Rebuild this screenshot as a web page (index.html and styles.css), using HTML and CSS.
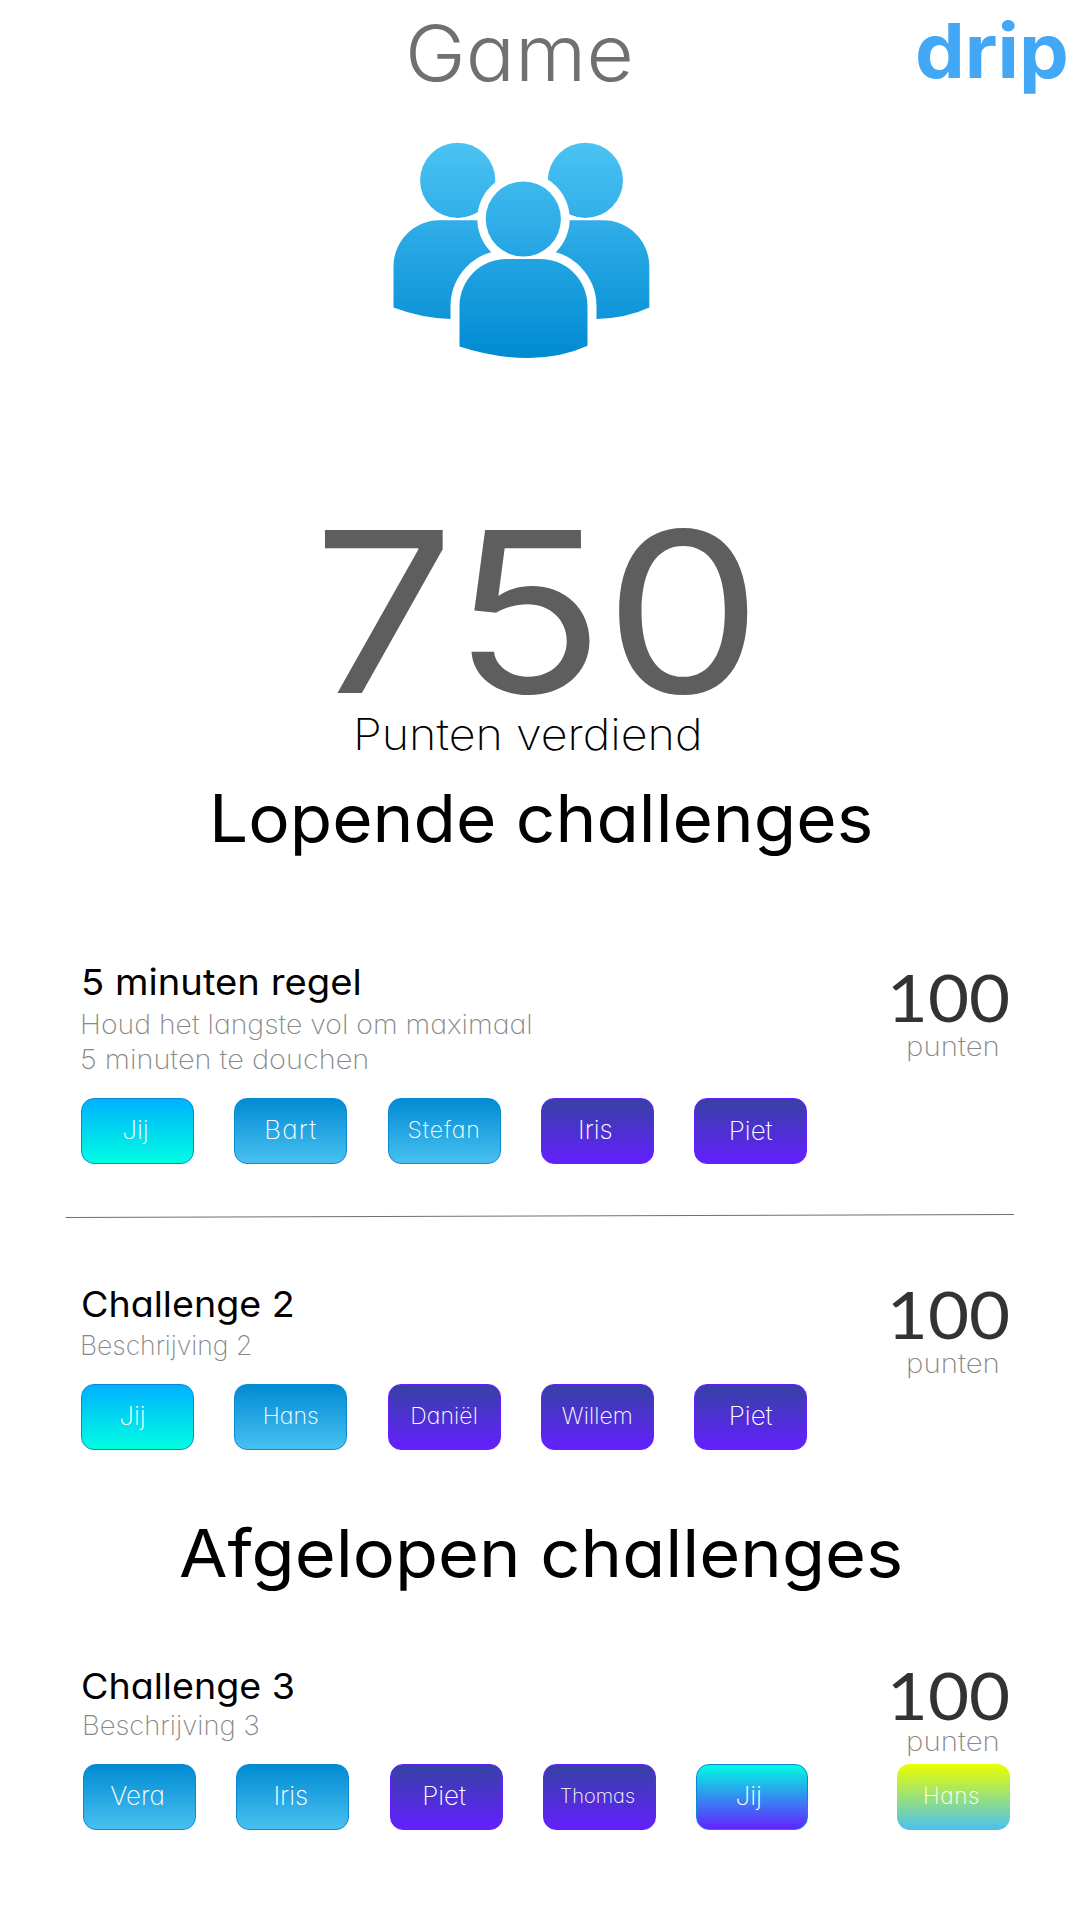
FILE: index.html
```html
<!DOCTYPE html>
<html lang="nl">
<head>
<meta charset="utf-8">
<title>Game</title>
<link rel="stylesheet" href="styles.css">
</head>
<body>
<header class="header">
  <h1 class="title">Game</h1>
  <div class="logo">drip</div>
</header>

<svg class="group-icon" viewBox="390 140 262 222" role="img" aria-label="Groep">
  <defs>
    <linearGradient id="blue" gradientUnits="userSpaceOnUse" x1="0" y1="143" x2="0" y2="358">
      <stop offset="0" stop-color="#4bc3f3"/>
      <stop offset="1" stop-color="#008ad3"/>
    </linearGradient>
  </defs>
  <g fill="url(#blue)">
    <circle cx="457.7" cy="180.3" r="37.6"/>
    <circle cx="585.4" cy="180.3" r="37.6"/>
    <path d="M393.5 266a46 46 0 0 1 46-45.7H500V319H450.500Q421 318 393.500 307.500Z"/>
    <path d="M649.300 266a46 46 0 0 0-46-45.700H545V319H596.500Q627 318 649.300 307.500Z"/>
  </g>
  <path fill="#fff" d="M450.500 322V306a56 56 0 0 1 56-56H540.500a56 56 0 0 1 56 56V322Z"/>
  <circle cx="523.500" cy="219" r="46.200" fill="#fff"/>
  <g fill="url(#blue)">
    <circle cx="523.300" cy="219" r="37.600"/>
    <path d="M459.500 306a47 47 0 0 1 47-47H540.500a47 47 0 0 1 47 47V345.800Q561 358 528 358T459.500 346.500Z"/>
  </g>
</svg>

<section class="total">
  <div class="total-points">750</div>
  <div class="total-label">Punten verdiend</div>
</section>

<main>
  <h2 class="heading heading-current">Lopende challenges</h2>

  <article class="card card-first">
    <div class="info">
      <h3 class="name name-regel">5 minuten regel</h3>
      <p class="desc"><span class="line line-a">Houd het langste vol om maximaal</span><br><span class="line line-b">5 minuten te douchen</span></p>
      <div class="players">
        <span class="chip you nudge-left">Jij</span>
        <span class="chip blue wide">Bart</span>
        <span class="chip blue mid spaced">Stefan</span>
        <span class="chip purple nudge-left">Iris</span>
        <span class="chip purple nudge-down">Piet</span>
      </div>
    </div>
    <div class="score"><div class="points">100</div><div class="unit">punten</div></div>
  </article>

  <svg class="divider" viewBox="0 0 1080 6"><path d="M65.500 4.500L1014 1.500" stroke="#707070"/></svg>

  <article class="card card-second">
    <div class="info">
      <h3 class="name">Challenge 2</h3>
      <p class="desc"><span class="line line-c">Beschrijving 2</span></p>
      <div class="players">
        <span class="chip you nudge-more">Jij</span>
        <span class="chip blue mid">Hans</span>
        <span class="chip purple mid">Daniël</span>
        <span class="chip purple mid">Willem</span>
        <span class="chip purple">Piet</span>
      </div>
    </div>
    <div class="score"><div class="points">100</div><div class="unit">punten</div></div>
  </article>

  <h2 class="heading heading-past">Afgelopen challenges</h2>

  <article class="card card-third">
    <div class="info">
      <h3 class="name">Challenge 3</h3>
      <p class="desc"><span class="line line-d">Beschrijving 3</span></p>
      <div class="players">
        <span class="chip blue nudge-left">Vera</span>
        <span class="chip blue nudge-left">Iris</span>
        <span class="chip purple nudge-left">Piet</span>
        <span class="chip purple small nudge-left">Thomas</span>
        <span class="chip you-past nudge-left">Jij</span>
      </div>
    </div>
    <div class="score"><div class="points">100</div><div class="unit">punten</div><span class="chip winner">Hans</span></div>
  </article>
</main>
</body>
</html>
```
FILE: styles.css
```css
* { box-sizing: border-box; }
body {
  margin: 0;
  width: 1080px;
  height: 1920px;
  overflow: hidden;
  background: #fff;
  color: #000;
  font-family: "Inter", "Liberation Sans", sans-serif;
  font-feature-settings: "cv11";
}
h1, h2, h3, p { margin: 0; font-weight: 400; }

.title, .logo, .total-points, .total-label, .heading, .name, .line, .unit {
  transform-origin: left;
  white-space: nowrap;
}

.header {
  display: grid;
  grid-template-columns: 510px 1fr;
  align-items: start;
  height: 110px;
  padding-left: 405px;
}
.title {
  padding-top: 8px;
  font-size: 77px;
  font-weight: 300;
  line-height: 90px;
  color: #707070;
  transform: scaleX(1.062);
}
.logo {
  padding-top: 5px;
  font-size: 76px;
  font-weight: 700;
  line-height: 90px;
  color: #42a8f5;
  transform: scaleX(1.04);
}
.group-icon {
  display: block;
  width: 262px;
  height: 222px;
  margin: 30px 0 0 390px;
}

.total { margin-top: 150px; }
.total-points {
  width: 440px;
  margin-left: 313px;
  font-size: 224px;
  line-height: 200px;
  color: #5e5e5e;
  transform: scaleX(1.117);
}
.total-label {
  width: 400px;
  margin: -3px 0 0 353px;
  font-size: 43px;
  font-weight: 200;
  line-height: 50px;
  transform: scaleX(1.084);
}

.heading { width: 700px; font-size: 66px; line-height: 80px; }
.heading-current { margin: 19px 0 102px 209px; transform: scaleX(1.05); }
.heading-past { margin: 63px 0 71px 179px; transform: scaleX(1.066); }

.card {
  display: flex;
  justify-content: space-between;
  padding: 0 70px 0 81px;
}
.card-third { padding-left: 83px; }
.name {
  width: 400px;
  font-size: 36px;
  line-height: 44px;
  transform: scaleX(1.045);
}
.name-regel { transform: scaleX(1.062); }
.card-third .name { margin-left: -2px; }
.desc {
  margin: 2px 0 21px -1px;
  font-size: 27px;
  font-weight: 200;
  line-height: 35px;
  color: #888;
}
.card-first .desc { margin-top: 3px; }
.card-third .desc { margin-top: 0; }
.line { display: inline-block; vertical-align: top; }
.line-a { transform: scaleX(1.051); }
.line-b { transform: scaleX(1.07); }
.line-c { transform: scaleX(0.98); }
.line-d { transform: scaleX(1.015); }

.players { display: flex; gap: 40.3px; }
.chip {
  display: flex;
  align-items: center;
  justify-content: center;
  width: 113px;
  height: 66px;
  padding-bottom: 3px;
  border: 1px solid #0a8ad2;
  border-radius: 13px;
  color: #fff;
  font-size: 26px;
  font-weight: 250;
}
.wide { letter-spacing: 1.2px; }
.mid { font-size: 23px; letter-spacing: 0.1px; }
.spaced { letter-spacing: 0.9px; }
.small { font-size: 20px; }
.nudge-left { padding-right: 4px; }
.nudge-more { padding-right: 10px; }
.nudge-down { padding-bottom: 1px; }
.you { background: linear-gradient(#00b0ff, #00ffe1) border-box; }
.blue { background: linear-gradient(#008ad3, #49c1f1) border-box; }
.purple { background: linear-gradient(#3542a3, #651fff) border-box; border-color: #651fff; }
.you-past { width: 112px; padding-right: 7px; background: linear-gradient(#00ffe1, #651fff) border-box; }
.winner {
  margin-top: auto;
  padding-right: 4px;
  border: 0;
  background: linear-gradient(#eaff00, #49c1f1);
  font-size: 22.5px;
  letter-spacing: 0.7px;
}

.score {
  display: flex;
  flex-direction: column;
  width: 113px;
}
.card-first .points { margin-top: 2px; }
.card-second .points { margin-top: -3px; }
.card-third .points { margin-top: -4px; }
.points {
  align-self: flex-end;
  font-family: "Lato", sans-serif;
  font-size: 65px;
  line-height: 70px;
  color: #333;
  transform: scaleX(1.09);
  transform-origin: right;
}
.unit {
  margin: -3px 0 0 9px;
  font-size: 27px;
  font-weight: 200;
  line-height: 35px;
  color: #888;
  transform: scaleX(1.09);
}
.card-third .unit { margin-top: -6px; }

.divider { display: block; width: 1080px; height: 6px; margin: 49px 0 63px; }
```
